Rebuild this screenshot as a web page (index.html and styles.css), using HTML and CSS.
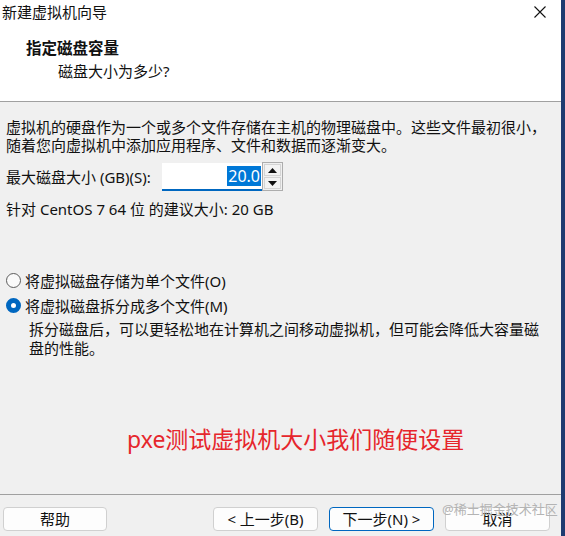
FILE: index.html
```html
<!DOCTYPE html>
<html lang="zh-CN">
<head>
<meta charset="utf-8">
<title>新建虚拟机向导</title>
<link rel="stylesheet" href="styles.css">
</head>
<body>
<div class="window">
  <div class="header">
    <div class="titlebar">
      <span class="title">新建虚拟机向导</span>
      <svg class="close" width="12" height="12" viewBox="0 0 12 12"><path d="M0.5 0.5 L11.5 11.5 M11.5 0.5 L0.5 11.5" stroke="#111" stroke-width="1.1" fill="none"/></svg>
    </div>
    <div class="heading">指定磁盘容量</div>
    <div class="sub">磁盘大小为多少?</div>
  </div>
  <div class="content">
    <p class="para">虚拟机的硬盘作为一个或多个文件存储在主机的物理磁盘中。这些文件最初很小，<br>随着您向虚拟机中添加应用程序、文件和数据而逐渐变大。</p>
    <div class="size-row">
      <span class="label">最大磁盘大小 (GB)(S):</span>
      <div class="input"><span class="sel">20.0</span></div>
      <div class="spin">
        <div class="spin-btn"><svg width="9" height="5" viewBox="0 0 9 5"><path d="M0 5 L4.5 0 L9 5 Z" fill="#111"/></svg></div>
        <div class="spin-btn"><svg width="9" height="5" viewBox="0 0 9 5"><path d="M0 0 L4.5 5 L9 0 Z" fill="#111"/></svg></div>
      </div>
    </div>
    <div class="recommend">针对 CentOS 7 64 位 的建议大小: 20 GB</div>
    <div class="radio-row first"><span class="radio"></span><span>将虚拟磁盘存储为单个文件(O)</span></div>
    <div class="radio-row"><span class="radio checked"></span><span>将虚拟磁盘拆分成多个文件(M)</span></div>
    <p class="desc">拆分磁盘后，可以更轻松地在计算机之间移动虚拟机，但可能会降低大容量磁<br>盘的性能。</p>
    <div class="note">pxe测试虚拟机大小我们随便设置</div>
  </div>
  <div class="footer">
    <button class="btn help">帮助</button>
    <div class="btn-group">
      <button class="btn">&lt; 上一步(B)</button>
      <button class="btn default">下一步(N) &gt;</button>
      <button class="btn">取消</button>
    </div>
    <span class="watermark">@稀土掘金技术社区</span>
  </div>
</div>
</body>
</html>
```

FILE: styles.css
```css
* { box-sizing: border-box; }
html, body { margin: 0; padding: 0; }
body {
  width: 565px;
  height: 536px;
  background: #f0f0f0;
  font-family: "Noto Sans", "Noto Sans CJK SC", sans-serif;
  font-size: 15px;
  color: #111;
  overflow: hidden;
}
.window {
  width: 565px;
  height: 536px;
  border-right: 4px solid #1e3b70;
  display: flex;
  flex-direction: column;
}
.header {
  background: #fff;
  height: 102px;
  border-bottom: 1px solid #a0a0a0;
}
.titlebar {
  height: 24px;
  display: flex;
  align-items: center;
  justify-content: space-between;
  padding: 0 15px 0 2px;
}
.title { line-height: 24px; }
.heading {
  margin: 14px 0 0 26px;
  font-weight: bold;
  font-size: 15.5px;
  line-height: 20px;
}
.sub {
  margin: 3px 0 0 58px;
  line-height: 20px;
}
.content {
  padding: 0 6px;
  flex: 1;
}
.para {
  margin: 16px 0 0;
  line-height: 18px;
}
.size-row {
  margin-top: 8px;
  display: flex;
  align-items: center;
  height: 29px;
}
.label { width: 156px; line-height: 20px; }
.input {
  width: 100px;
  height: 28px;
  background: #fff;
  border-bottom: 2px solid #0067c0;
  display: flex;
  align-items: center;
  justify-content: flex-end;
  padding-right: 1px;
}
.sel {
  background: #0078d7;
  color: #fff;
  font-size: 16px;
  line-height: 20px;
  padding: 0 1px;
}
.spin {
  width: 21px;
  height: 29px;
  border: 1px solid #adadad;
  display: flex;
  flex-direction: column;
  padding: 1px;
  gap: 1px;
  background: #f0f0f0;
}
.spin-btn {
  flex: 1;
  border: 1px solid #d4d4d4;
  background: #f3f3f3;
  display: flex;
  align-items: center;
  justify-content: center;
}
.recommend {
  margin-top: 9px;
  line-height: 18px;
}
.radio-row {
  display: flex;
  align-items: center;
  gap: 4px;
  height: 20px;
  margin-top: 5px;
}
.radio-row.first { margin-top: 52px; }
.radio {
  width: 15px;
  height: 15px;
  flex: none;
  border-radius: 50%;
  border: 1px solid #5c5c5c;
  background: #fafafa;
}
.radio.checked {
  border: 5px solid #0067c0;
  background: #fff;
}
.desc {
  margin: 5px 0 0 23px;
  line-height: 19px;
}
.note {
  margin: 66px 0 0 121px;
  font-size: 23px;
  line-height: 30px;
  color: #e6262c;
}
.footer {
  height: 42px;
  border-top: 1px solid #a0a0a0;
  display: flex;
  justify-content: space-between;
  padding: 12px 11px 0 3px;
  position: relative;
}
.btn {
  width: 105px;
  height: 24px;
  border: 1px solid #d0d0d0;
  border-radius: 4px;
  background: #fdfdfd;
  font-family: inherit;
  font-size: 15px;
  color: #111;
  padding: 0;
  line-height: 20px;
}
.help { width: 104px; }
.btn.default { border-color: #0067c0; }
.btn-group { display: flex; gap: 11px; }
.watermark {
  position: absolute;
  left: 442px;
  top: 6px;
  font-size: 13px;
  line-height: 16px;
  color: #b4b4b4;
  white-space: nowrap;
}
```
